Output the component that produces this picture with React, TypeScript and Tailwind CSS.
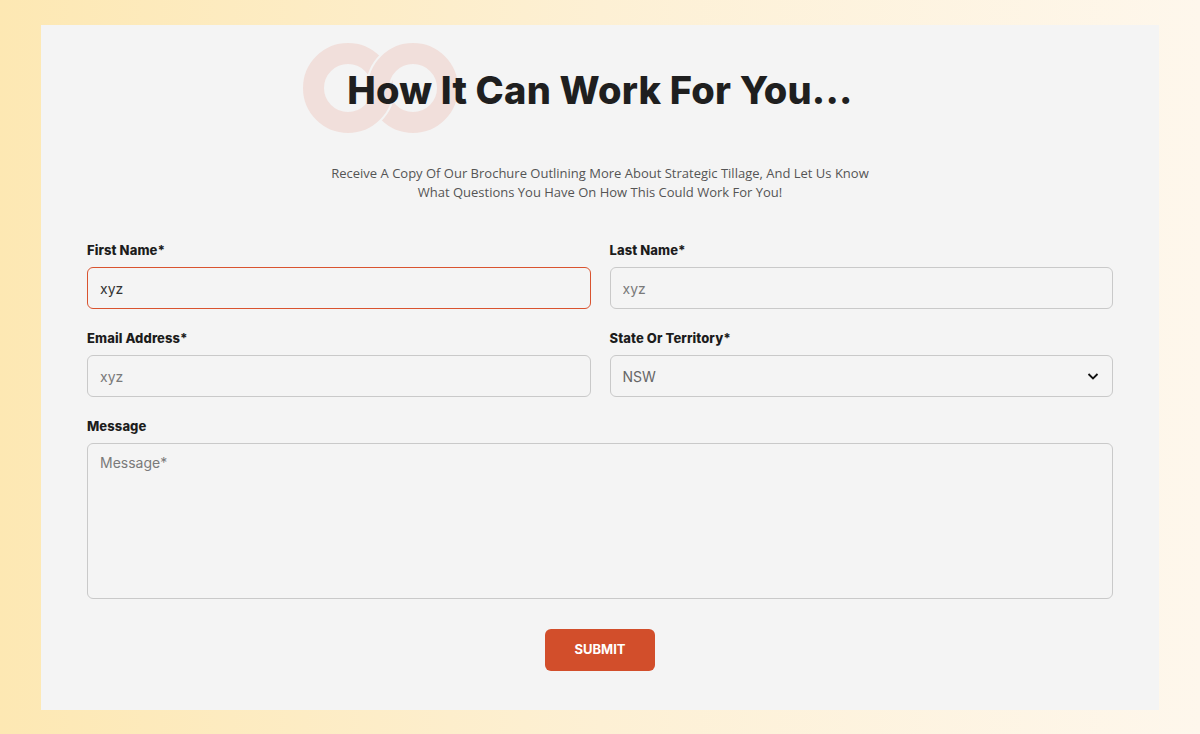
import React from 'react';

const labelCls = 'block text-[13px] font-extrabold text-[#1c1c1c] mb-[9px] leading-4 tracking-[0.1px]';
const inputCls =
  'w-full h-[42px] rounded-[6px] border border-[#c9c9c9] bg-transparent px-3 text-[14px] text-[#333] placeholder:text-[#7a7a7a] outline-none';

const Rings: React.FC = () => (
  <svg width="160" height="94" viewBox="0 0 160 94" className="absolute left-[-45px] top-[-26px]">
    <circle cx="46" cy="47" r="34.5" fill="none" stroke="#f1dfdb" strokeWidth="21" />
    {/* right ring passes over the left at the top */}
    <path d="M 76.5 47 A 34.5 34.5 0 0 1 111 12.5" fill="none" stroke="#f4f4f4" strokeWidth="25" />
    <circle cx="111" cy="47" r="34.5" fill="none" stroke="#f1dfdb" strokeWidth="21" />
    {/* left ring passes over the right at the bottom */}
    <path d="M 80.5 47 A 34.5 34.5 0 0 1 46 81.5" fill="none" stroke="#f4f4f4" strokeWidth="25" />
    <path d="M 80.5 47 A 34.5 34.5 0 0 1 46 81.5" fill="none" stroke="#f1dfdb" strokeWidth="21" />
  </svg>
);

export default function App() {
  return (
    <div
      className="min-h-[734px] w-full bg-gradient-to-r from-[#fde8b3] via-[#fdf0d4] to-[#fef7ec] pl-[41px] pr-[41px] pt-[25px] pb-[24px]"
      style={{ fontFamily: 'Inter, "Liberation Sans", sans-serif' }}
    >
      <div className="h-[685px] bg-[#f4f4f4] px-[46px] pt-[42px]">
        <div className="flex justify-center">
          <div className="relative">
            <Rings />
            <h1 className="relative text-[38px] leading-[46px] font-extrabold tracking-[0.2px] text-[#1f1f1f]">
              How It Can Work For You...
            </h1>
          </div>
        </div>

        <p
          className="mt-[51px] text-center text-[13px] leading-[19px] text-[#555]"
          style={{ fontFamily: '"Open Sans", "Liberation Sans", sans-serif' }}
        >
          Receive A Copy Of Our Brochure Outlining More About Strategic Tillage, And Let Us Know
          <br />
          What Questions You Have On How This Could Work For You!
        </p>

        <form className="mt-[40px]" onSubmit={(e) => e.preventDefault()}>
          <div className="grid grid-cols-2 gap-x-[19px] gap-y-[21px]">
            <div>
              <label className={labelCls}>First Name*</label>
              <input className={`${inputCls} border-[#d9532f]`} defaultValue="xyz" readOnly />
            </div>
            <div>
              <label className={labelCls}>Last Name*</label>
              <input className={inputCls} placeholder="xyz" />
            </div>
            <div>
              <label className={labelCls}>Email Address*</label>
              <input className={inputCls} placeholder="xyz" />
            </div>
            <div>
              <label className={labelCls}>State Or Territory*</label>
              <div className="relative">
                <select className={`${inputCls} appearance-none text-[#666]`} defaultValue="NSW">
                  <option>NSW</option>
                  <option>VIC</option>
                  <option>QLD</option>
                  <option>SA</option>
                  <option>WA</option>
                  <option>TAS</option>
                  <option>NT</option>
                  <option>ACT</option>
                </select>
                <svg
                  className="pointer-events-none absolute right-[14px] top-[16px]"
                  width="12"
                  height="10"
                  viewBox="0 0 12 10"
                >
                  <path d="M1.5 3 L6 7.5 L10.5 3" fill="none" stroke="#111" strokeWidth="1.8" />
                </svg>
              </div>
            </div>
            <div className="col-span-2">
              <label className={labelCls}>Message</label>
              <textarea
                className="w-full h-[156px] resize-none rounded-[6px] border border-[#c9c9c9] bg-transparent px-3 py-[8px] text-[14px] text-[#333] placeholder:text-[#7a7a7a] outline-none block"
                placeholder="Message*"
              />
            </div>
          </div>

          <div className="mt-[30px] flex justify-center">
            <button
              type="submit"
              className="h-[42px] w-[110px] rounded-[6px] bg-[#d24e2b] text-[13px] font-bold text-white"
            >
              SUBMIT
            </button>
          </div>
        </form>
      </div>
    </div>
  );
}
